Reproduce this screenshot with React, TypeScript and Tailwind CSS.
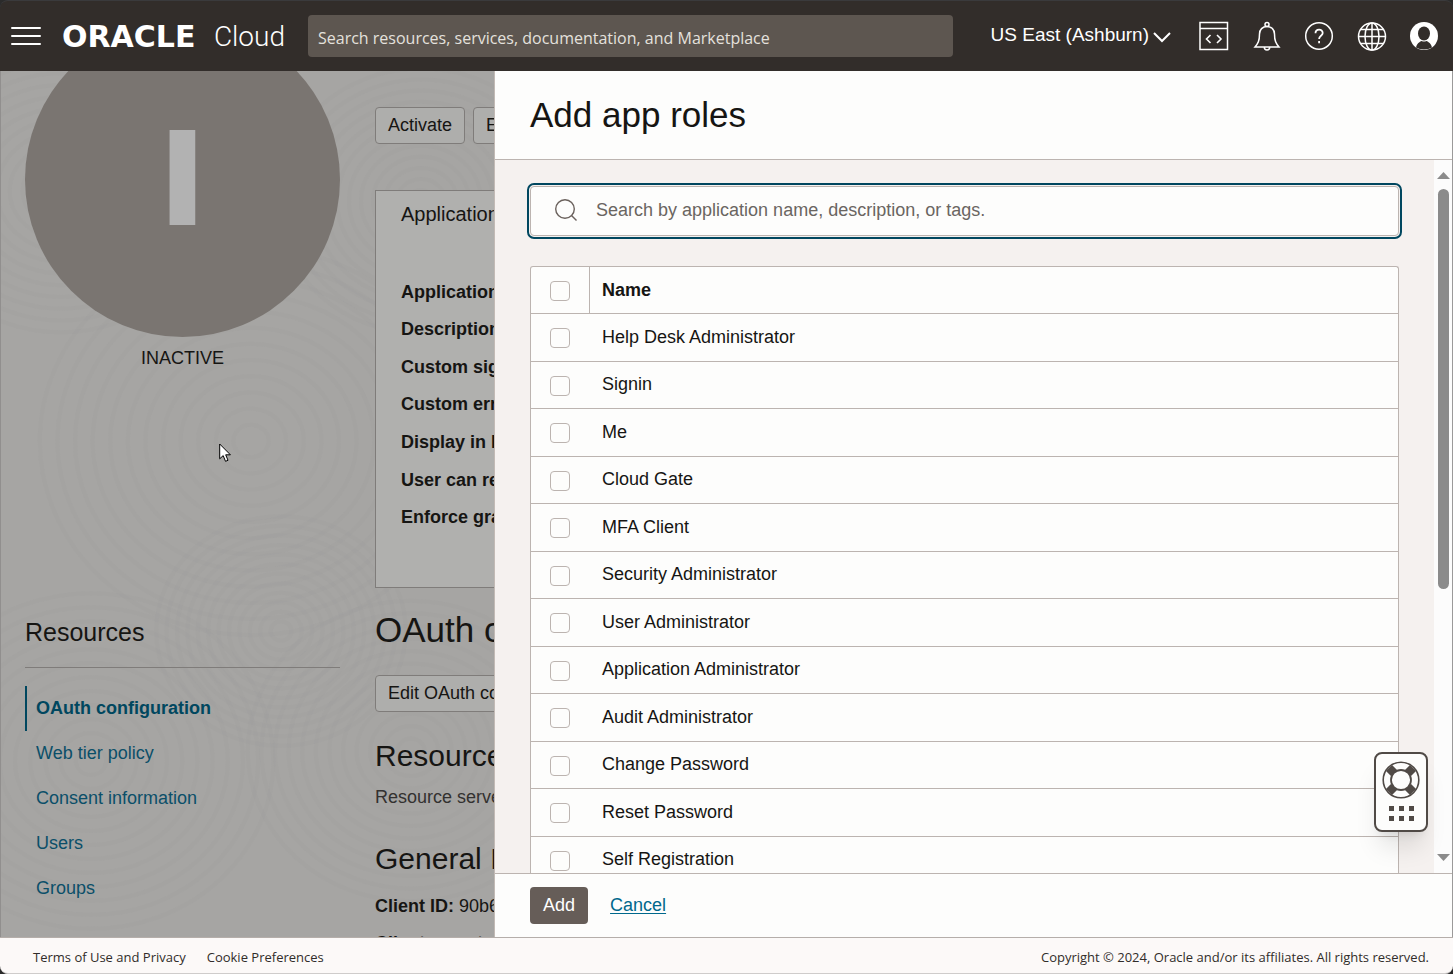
import type { ReactNode } from "react";

const roles = [
  "Help Desk Administrator",
  "Signin",
  "Me",
  "Cloud Gate",
  "MFA Client",
  "Security Administrator",
  "User Administrator",
  "Application Administrator",
  "Audit Administrator",
  "Change Password",
  "Reset Password",
  "Self Registration",
];

const resources = ["OAuth configuration", "Web tier policy", "Consent information", "Users", "Groups"];

const details = [
  "Application",
  "Description",
  "Custom sign",
  "Custom error",
  "Display in My",
  "User can req",
  "Enforce grant",
];

const ringCenters = [
  [250, 370, 220],
  [90, 690, 190],
  [60, 120, 160],
  [420, 130, 150],
  [410, 680, 170],
  [280, 560, 130],
];

const ringSteps = [0.08, 0.16, 0.24, 0.32, 0.4, 0.48, 0.56, 0.64, 0.72, 0.8, 0.88, 0.96];

/* Faint ring texture behind the page content */
const Texture = () => (
  <svg className="absolute inset-0 h-full w-full" aria-hidden="true">
    {ringCenters.map(([x, y, size]) => (
      <g key={`${x}-${y}`} fill="none" stroke="#9b9a99" strokeOpacity="0.16" strokeWidth="4">
        {ringSteps.map((step) => (
          <ellipse key={step} cx={x} cy={y} rx={size * step} ry={size * step * 0.92} />
        ))}
      </g>
    ))}
  </svg>
);

const IconButton = ({ label, children }: { label: string; children: ReactNode }) => (
  <button type="button" aria-label={label} className="flex size-[30px] items-center justify-center">
    <svg width="30" height="30" viewBox="0 0 30 30" fill="none" stroke="white" strokeWidth="1.5">
      {children}
    </svg>
  </button>
);

const Header = () => (
  <header className="flex h-[71px] shrink-0 items-center rounded-t-lg border-t border-[#3a3a3c] bg-[#322d2a] pr-[14px] pl-[11px] text-white">
    <button type="button" aria-label="Open navigation menu">
      <svg width="30" height="18" viewBox="0 0 30 18" stroke="white" strokeWidth="2" strokeLinecap="round">
        <path d="M1 1h28M1 9h28M1 17h28" />
      </svg>
    </button>
    <a href="#home" className="ml-[21px] flex w-[223px] items-center justify-between pt-[2px] leading-8">
      <span className="font-['DejaVu_Sans',sans-serif] text-3xl leading-8 font-bold">ORACLE</span>
      <span className="font-[Roboto,sans-serif] text-[28px] leading-8 font-light">Cloud</span>
    </a>
    <input
      type="search"
      aria-label="Search"
      placeholder="Search resources, services, documentation, and Marketplace"
      className="ml-[23px] h-[42px] min-w-0 flex-1 rounded bg-[#5d5650] px-[10px] pt-[3px] font-['Open_Sans',sans-serif] text-base text-white placeholder:text-[#e4e1dd]"
    />
    <button type="button" className="ml-[38px] flex items-center gap-1 pb-[2px] text-[19px] whitespace-nowrap">
      US East (Ashburn)
      <svg className="mt-1" width="18" height="12" viewBox="0 0 18 12" fill="none" stroke="white" strokeWidth="2">
        <path d="m1 2 8 8 8-8" />
      </svg>
    </button>
    <div className="ml-7 flex w-60 justify-between">
      <IconButton label="Developer tools">
        <path d="M1 1.500h27.500v27H1zM1 7.500h27.500" />
        <path d="m11.500 14-4 4 4 4M18 14l4 4-4 4" strokeWidth="1.600" />
      </IconButton>
      <IconButton label="Announcements">
        <circle cx="15" cy="3.500" r="2" />
        <path d="M15 5.500c-4.500 0-7.500 3.200-7.500 7.500 0 7-1.500 9.500-4.500 13h24c-3-3.500-4.500-6-4.500-13 0-4.300-3-7.500-7.500-7.500zM12.300 26c0 4 5.400 4 5.400 0" />
      </IconButton>
      <IconButton label="Help">
        <circle cx="15" cy="15" r="13.300" />
        <path d="M11.500 12.300c0-4.800 7.200-4.800 7.200-.4 0 3-3.600 2.800-3.600 6.100M15.100 20v2.300" strokeWidth="1.800" />
      </IconButton>
      <IconButton label="Language">
        <circle cx="15" cy="15.500" r="13.500" />
        <ellipse cx="15" cy="15.500" rx="7" ry="13.500" />
        <path d="M15 2v27M1.500 15.500h27M3.800 8.500h22.400M3.800 22.500h22.400" />
      </IconButton>
      <IconButton label="Profile">
        <circle cx="15" cy="15" r="14" fill="white" stroke="none" />
        <ellipse cx="15" cy="12.500" rx="6" ry="7" fill="#322d2a" stroke="none" />
        <path d="M7 26.500c.8-4 3.500-5.800 5.700-6.600 1.500.8 3.100.8 4.600 0 2.200.8 4.900 2.600 5.700 6.600-4.500 2.600-11.500 2.600-16 0z" fill="#322d2a" stroke="none" />
      </IconButton>
    </div>
  </header>
);

const pageButton = "h-[37px] rounded border border-[#7f7c7a] bg-[#aeaeac] px-3 pb-[2px]";

const Page = () => (
  <div className="relative flex w-[34%] shrink-0 gap-[35px] overflow-hidden border-l border-[#918f8e] bg-[#a6a5a3] pl-6">
    <Texture />
    <aside className="relative w-[315px] shrink-0">
      <div className="-mt-[49px] flex size-[315px] items-center justify-center rounded-full bg-[#7a7571] pb-1 font-[Inter,sans-serif] text-[130px] leading-none font-black text-[#b2b2b2]">
        I
      </div>
      <p className="mt-[9px] text-center leading-6">INACTIVE</p>
      <h2 className="mt-[246px] border-b border-[#7f7c7a] pb-[19px] text-[25px] leading-8">Resources</h2>
      <nav className="mt-[18px] flex flex-col text-[#0b4f69]">
        {resources.map((item) => (
          <a
            key={item}
            href="#resources"
            className="border-l-2 border-transparent pl-[9px] leading-[45px] first:border-[#00475f] first:font-bold first:text-[#00475f]"
          >
            {item}
          </a>
        ))}
      </nav>
    </aside>

    <main className="relative min-w-0 flex-1 overflow-hidden whitespace-nowrap">
      <div className="mt-9 flex gap-2">
        <button type="button" className={pageButton}>Activate</button>
        <button type="button" className={pageButton}>Edit</button>
      </div>
      <section className="mt-[46px] h-[398px] overflow-hidden border border-r-0 border-[#7f7c7a] bg-[#b0b0ae] pt-[11px] pl-[25px]">
        <h2 className="text-xl leading-6">Application</h2>
        <ul className="mt-[47px] grid h-[263px] grid-rows-7 items-center font-bold">
          {details.map((label) => (
            <li key={label}>{label}</li>
          ))}
        </ul>
      </section>
      <h1 className="mt-[22px] text-[35px] leading-10">OAuth co</h1>
      <button type="button" className={`mt-[25px] ${pageButton}`}>Edit OAuth con</button>
      <h2 className="mt-[26px] text-3xl leading-9">Resource</h2>
      <p className="mt-[11px] leading-6 text-[#333130]">Resource server</p>
      <h2 className="mt-8 text-3xl leading-9">General In</h2>
      <p className="mt-[11px] leading-[37px]"><b>Client ID:</b> 90b6</p>
      <p className="leading-[37px]"><b>Client secret:</b></p>
    </main>
  </div>
);

const Checkbox = ({ label }: { label: string }) => (
  <input
    type="checkbox"
    aria-label={label}
    className="mt-px block size-5 appearance-none rounded border border-[#bcb4b0] bg-[#fdfdfc] checked:bg-[#00475f]"
  />
);

/* Decorative track next to the role list */
const ScrollTrack = () => (
  <div className="flex w-[18px] shrink-0 flex-col items-center bg-[#fcfcfc] py-3" aria-hidden="true">
    <svg width="13" height="7" viewBox="0 0 13 7" fill="#8b8b8b">
      <path d="M0 7 6.500 0 13 7z" />
    </svg>
    <div className="mt-[10px] h-[58%] w-[11px] rounded-full bg-[#8b8b8b]" />
    <svg className="mt-auto" width="13" height="7" viewBox="0 0 13 7" fill="#8b8b8b">
      <path d="M0 0h13L6.500 7z" />
    </svg>
  </div>
);

const Drawer = () => (
  <section
    role="dialog"
    aria-labelledby="drawer-title"
    className="flex min-w-0 flex-1 flex-col border-x border-l-[#c2bab5] border-r-[#9b9a9a] bg-[#fdfdfc]"
  >
    <h2 id="drawer-title" className="border-b border-[#bcb4b0] px-[35px] py-6 text-[35px] leading-10">
      Add app roles
    </h2>
    <div className="flex min-h-0 flex-1">
      <div className="min-w-0 flex-1 overflow-hidden bg-[#f5f1ef] px-[35px] pt-[26px]">
        <label className="flex h-[50px] items-center gap-[18px] rounded border border-[#bcb4b0] bg-[#fdfdfc] pb-[2px] pl-[23px] outline-2 outline-offset-1 outline-[#00475f]">
          <svg width="24" height="24" viewBox="0 0 24 24" fill="none" stroke="#6a615c" strokeWidth="1.400">
            <circle cx="11" cy="11" r="9.300" />
            <path d="m17.500 17.500 5 5" />
          </svg>
          <input
            type="text"
            aria-label="Search app roles"
            placeholder="Search by application name, description, or tags."
            className="min-w-0 flex-1 bg-transparent outline-none placeholder:text-[#6a6561]"
          />
        </label>
        <table className="mt-[30px] w-full border-separate border-spacing-0 rounded-[3px] border border-b-0 border-[#bcb4b0] bg-[#fdfdfc]">
          <thead>
            <tr className="h-[47px]">
              <th className="w-[59px] border-r border-b border-[#bcb4b0] pt-px pl-[19px]">
                <Checkbox label="Select all" />
              </th>
              <th className="border-b border-[#bcb4b0] pl-3 text-left">Name</th>
            </tr>
          </thead>
          <tbody>
            {roles.map((role) => (
              <tr key={role} className="odd:h-12 even:h-[47px]">
                <td className="border-b border-[#bcb4b0] pl-[19px]">
                  <Checkbox label={role} />
                </td>
                <td className="border-b border-[#bcb4b0] pb-[2px] pl-3">{role}</td>
              </tr>
            ))}
          </tbody>
        </table>
      </div>
      <ScrollTrack />
    </div>
    <div className="flex h-16 items-center gap-[22px] border-t border-[#bcb4b0] px-[35px]">
      <button type="button" className="h-[37px] rounded bg-[#665d58] px-[13px] pb-[2px] text-white">Add</button>
      <a href="#cancel" className="pb-[2px] text-[#00688c] underline underline-offset-2">Cancel</a>
    </div>
  </section>
);

const HelpWidget = () => (
  <button
    type="button"
    aria-label="Support"
    className="absolute right-[25px] bottom-[105px] flex h-20 w-[54px] items-center justify-center rounded-lg border-2 border-[#504a46] bg-[#fdfdfc] shadow-xl"
  >
    <svg width="38" height="62" viewBox="0 0 38 62" fill="none" stroke="#504a46">
      <g strokeWidth="8.500">
        <path d="m7 7 5 5M31 7l-5 5M7 31l5-5M31 31l-5-5" />
      </g>
      <circle cx="19" cy="19" r="17.800" strokeWidth="1.600" />
      <circle cx="19" cy="19" r="10" strokeWidth="1.800" />
      <g fill="#504a46" stroke="none">
        <path d="M7 45h5v5H7zM17 45h5v5h-5zM27 45h5v5h-5zM7 55h5v5H7zM17 55h5v5h-5zM27 55h5v5h-5z" />
      </g>
    </svg>
  </button>
);

const Pointer = () => (
  <svg className="absolute top-[372px] left-[219px]" width="13" height="20" viewBox="0 0 13 20" aria-hidden="true">
    <path d="M.7 1v14.800l3.500-3.200 2.300 5.700 2.500-1-2.300-5.500h4.700z" fill="white" stroke="black" />
  </svg>
);

export default function App() {
  return (
    <div className="flex h-screen flex-col overflow-hidden bg-[#2b2b2b] font-['Liberation_Sans',Arial,sans-serif] text-lg text-[#161513]">
      <Header />
      <div className="relative flex min-h-0 flex-1">
        <Page />
        <Drawer />
        <Pointer />
        <HelpWidget />
      </div>
      <footer className="flex h-[37px] shrink-0 items-center gap-[21px] rounded-b-lg border-y border-t-[#b5aeaa] border-b-[#cfcccb] bg-[#fcf9f8] pt-1 pr-6 pl-[33px] font-['Open_Sans',sans-serif] text-[13px] text-[#312d2a]">
        <a href="#terms">Terms of Use and Privacy</a>
        <a href="#cookies">Cookie Preferences</a>
        <p className="ml-auto">Copyright © 2024, Oracle and/or its affiliates. All rights reserved.</p>
      </footer>
    </div>
  );
}
